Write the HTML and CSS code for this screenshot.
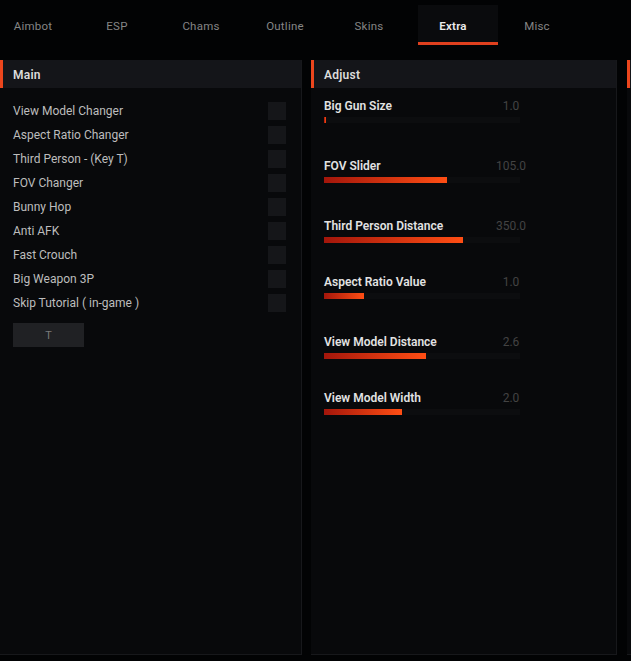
FILE: index.html
```html
<!DOCTYPE html>
<html lang="en">

<head>
    <meta charset="UTF-8">
    <meta name="viewport" content="width=device-width, initial-scale=1.0">
    <title>Extra - Menu</title>
    <link rel="stylesheet" href="styles.css">
</head>

<body>

    <!-- Tab Bar -->
    <nav class="tabs">
        <a href="#" class="tab">Aimbot</a>
        <a href="#" class="tab">ESP</a>
        <a href="#" class="tab">Chams</a>
        <a href="#" class="tab">Outline</a>
        <a href="#" class="tab">Skins</a>
        <a href="#" class="tab active">Extra</a>
        <a href="#" class="tab">Misc</a>
    </nav>

    <div class="panels">

        <!-- Main toggles -->
        <section class="panel panel-main">
            <div class="panel-head">Main</div>
            <div class="panel-body">
                <label class="toggle"><span>View Model Changer</span><i class="check"></i></label>
                <label class="toggle"><span>Aspect Ratio Changer</span><i class="check"></i></label>
                <label class="toggle"><span>Third Person - (Key T)</span><i class="check"></i></label>
                <label class="toggle"><span>FOV Changer</span><i class="check"></i></label>
                <label class="toggle"><span>Bunny Hop</span><i class="check"></i></label>
                <label class="toggle"><span>Anti AFK</span><i class="check"></i></label>
                <label class="toggle"><span>Fast Crouch</span><i class="check"></i></label>
                <label class="toggle"><span>Big Weapon 3P</span><i class="check"></i></label>
                <label class="toggle"><span>Skip Tutorial ( in-game )</span><i class="check"></i></label>
                <button class="key-btn">T</button>
            </div>
        </section>

        <!-- Sliders -->
        <section class="panel panel-adjust">
            <div class="panel-head">Adjust</div>
            <div class="panel-body">
                <div class="slider">
                    <div class="slider-head"><span>Big Gun Size</span><span class="value">1.0</span></div>
                    <div class="track"><div class="fill" style="width: 2px"></div></div>
                </div>
                <div class="slider">
                    <div class="slider-head"><span>FOV Slider</span><span class="value">105.0</span></div>
                    <div class="track"><div class="fill" style="width: 123px"></div></div>
                </div>
                <div class="slider short">
                    <div class="slider-head"><span>Third Person Distance</span><span class="value">350.0</span></div>
                    <div class="track"><div class="fill" style="width: 139px"></div></div>
                </div>
                <div class="slider">
                    <div class="slider-head"><span>Aspect Ratio Value</span><span class="value">1.0</span></div>
                    <div class="track"><div class="fill" style="width: 40px"></div></div>
                </div>
                <div class="slider short">
                    <div class="slider-head"><span>View Model Distance</span><span class="value">2.6</span></div>
                    <div class="track"><div class="fill" style="width: 102px"></div></div>
                </div>
                <div class="slider">
                    <div class="slider-head"><span>View Model Width</span><span class="value">2.0</span></div>
                    <div class="track"><div class="fill" style="width: 78px"></div></div>
                </div>
            </div>
        </section>

        <!-- Next panel, cut off at the edge -->
        <section class="panel panel-next">
            <div class="panel-head"></div>
        </section>

    </div>

</body>

</html>
```

FILE: styles.css
```css
body,
html {
    margin: 0;
    padding: 0;
    height: 661px;
    overflow: hidden;
    background-color: #020304;
    font-family: Roboto, 'Liberation Sans', sans-serif;
}

/* Tab Bar */
.tabs {
    display: flex;
    gap: 4px;
    height: 46px;
    margin-left: -2px;
}

.tab {
    width: 80px;
    height: 40px;
    margin-top: 5px;
    padding-right: 10px;
    line-height: 42px;
    text-align: center;
    text-decoration: none;
    color: #858585;
    font-size: 11.5px;
    letter-spacing: 0.02em;
    box-sizing: border-box;
}

.tab.active {
    color: #ececec;
    font-weight: 600;
    background-color: #0a0b0d;
    border-bottom: 3px solid #e0401e;
}

/* Panels */
.panels {
    display: flex;
    margin-top: 14px;
    height: 595px;
}

.panel {
    flex: none;
    background-color: #08090b;
    border-right: 1px solid #17181b;
    border-bottom: 1px solid #17181b;
    box-sizing: border-box;
}

.panel-main {
    width: 302px;
}

.panel-adjust {
    width: 306px;
    margin-left: 9px;
}

.panel-next {
    width: 200px;
    margin-left: 10px;
}

.panel-head {
    height: 28px;
    line-height: 30px;
    padding-left: 10px;
    border-left: 3px solid #ec461d;
    background-color: #141519;
    color: #dcdcdc;
    font-size: 12px;
    font-weight: 600;
    letter-spacing: 0.02em;
}

.panel-body {
    padding: 11px 15px 0 13px;
}

/* Toggles */
.toggle {
    display: flex;
    justify-content: space-between;
    align-items: center;
    height: 24px;
    color: #bdbdbd;
    font-size: 12px;
}

.check {
    width: 18px;
    height: 18px;
    background-color: #151619;
}

.key-btn {
    display: block;
    width: 71px;
    height: 24px;
    margin-top: 8px;
    border: none;
    background-color: #202124;
    color: #7a7a7a;
    font-family: inherit;
    font-size: 11px;
}

/* Sliders */
.panel-adjust .panel-body {
    padding-top: 10px;
}

.slider {
    width: 196px;
    height: 60px;
}

.slider.short {
    height: 56px;
}

.slider-head {
    display: flex;
    justify-content: space-between;
    height: 16px;
    line-height: 16px;
    margin-bottom: 3px;
    color: #e2e2e2;
    font-size: 12px;
    font-weight: 600;
}

.slider-head .value {
    width: 34px;
    margin-right: -8px;
    text-align: center;
    color: #434343;
    font-weight: 400;
}

.track {
    height: 6px;
    background-color: #0c0d0f;
}

.fill {
    height: 100%;
    background: linear-gradient(90deg, #a3160b, #ff4e14);
}
```
